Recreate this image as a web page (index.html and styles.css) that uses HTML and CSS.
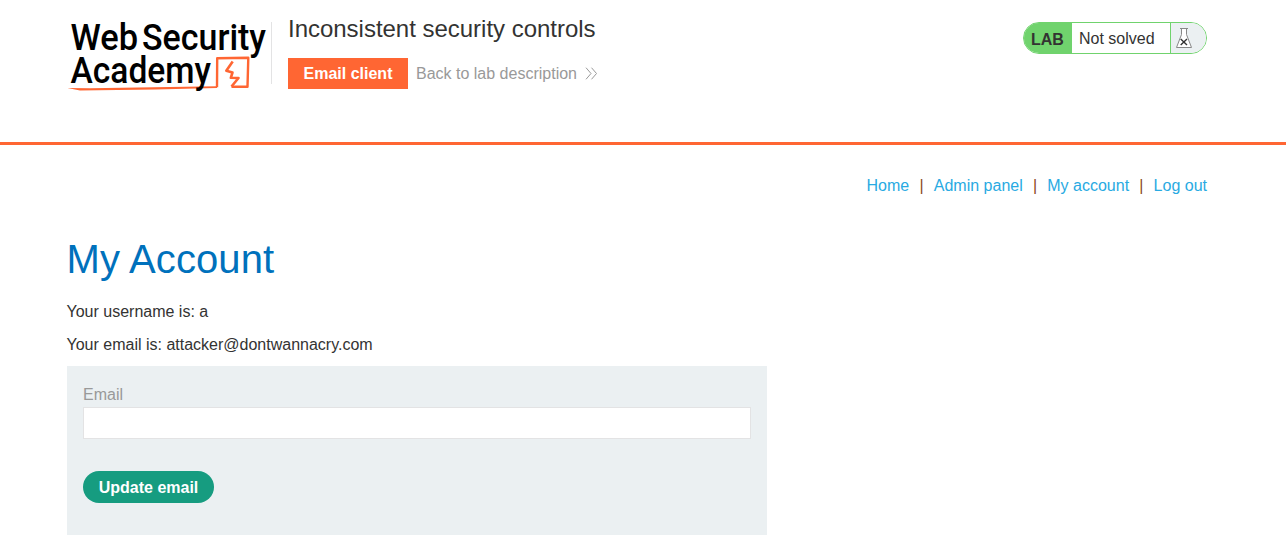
FILE: index.html
```html
<!DOCTYPE html>
<html lang="en">
<head>
<meta charset="utf-8">
<title>Inconsistent security controls</title>
<link rel="stylesheet" href="styles.css">
</head>
<body>
<header class="lab-header">
  <svg class="logo" width="204" height="84" viewBox="67 10 204 84" role="img" aria-label="Web Security Academy">
    <path class="logo-line" d="M67.5 88L90 88.2L217 86.2V88L155 89.4L80 90.4Z"/>
    <g class="logo-text">
      <text x="70.5" y="50" textLength="67.5" lengthAdjust="spacingAndGlyphs">Web</text>
      <text x="142" y="50" textLength="124" lengthAdjust="spacingAndGlyphs">Security</text>
      <text x="70.5" y="83" textLength="140.5" lengthAdjust="spacingAndGlyphs">Academy</text>
    </g>
    <path class="logo-box" d="M217 87.2L217.2 58.2L248.3 57.8L247.5 86.8L231.5 86.8"/>
    <path class="logo-bolt" d="M232.7 61.5L226.3 70.8L232.5 72.5L230.8 77.8L238.5 78L231.5 86.5"/>
  </svg>
  <div class="lab-title">
    <h2>Inconsistent security controls</h2>
    <div class="lab-links">
      <a class="client-button">Email client</a>
      <a class="back-link">Back to lab description
        <svg width="13" height="13" viewBox="0 0 13 13"><path d="M1 .7L6 6.5L1 12.3M6.5 .7L11.5 6.5L6.5 12.3"/></svg>
      </a>
    </div>
  </div>
  <div class="status">
    <span class="status-tag">LAB</span>
    <span class="status-text">Not solved</span>
    <span class="status-icon">
      <svg width="18" height="22" viewBox="0 0 18 22">
        <path class="flask" d="M5 1.5H13M6.5 1.5V7.5L1.5 20.5H16.5L11.5 7.5V1.5"/>
        <path class="cross" d="M5.7 12L12 18M12 12L5.7 18"/>
      </svg>
    </span>
  </div>
</header>
<main class="page">
  <nav class="top-nav">
    <a>Home</a><span>|</span><a>Admin panel</a><span>|</span><a>My account</a><span>|</span><a>Log out</a>
  </nav>
  <h1>My Account</h1>
  <p>Your username is: a</p>
  <p>Your email is: attacker@dontwannacry.com</p>
  <form class="email-form">
    <label for="email">Email</label>
    <input id="email" type="email">
    <button type="button">Update email</button>
  </form>
</main>
</body>
</html>
```

FILE: styles.css
```css
* { box-sizing: border-box; }
body {
  margin: 0;
  background: #fff;
  color: #333332;
  font: 16px/18px "Liberation Sans", Arial, sans-serif;
}
.lab-header {
  display: flex;
  align-items: flex-start;
  height: 145px;
  padding: 0 79px 0 67px;
  border-bottom: 3px solid #ff6633;
}
.logo { display: block; margin-top: 10px; overflow: visible; }
.logo-text { font: 500 37px Roboto, sans-serif; fill: #000; }
.logo-box, .logo-bolt { fill: none; stroke: #ff6633; stroke-width: 2.4; stroke-linejoin: round; }
.logo-bolt { stroke-width: 2.6; }
.logo-line { fill: #ff6633; }
.lab-title {
  margin-top: 22px;
  height: 62px;
  border-left: 1px solid #e3e3e4;
  padding-left: 16px;
}
.lab-title h2 {
  margin: -7px 0 0;
  font-size: 24px;
  line-height: 28px;
  font-weight: 400;
  letter-spacing: -0.02px;
}
.lab-links { display: flex; align-items: center; gap: 8px; margin-top: 15px; }
.client-button {
  width: 120px;
  height: 31px;
  background: #ff6633;
  color: #fff;
  font-weight: 700;
  line-height: 31px;
  text-align: center;
}
.back-link { display: flex; align-items: center; gap: 8px; color: #999; }
.back-link svg { fill: none; stroke: #999; stroke-width: 1; }
.status {
  display: flex;
  margin: 22px 0 0 auto;
  width: 184px;
  height: 32px;
  border: 1px solid #70d36d;
  border-radius: 16px;
  overflow: hidden;
  line-height: 31px;
}
.status-tag { width: 48px; padding-left: 7px; background: #70d36d; font-weight: 700; line-height: 33px; }
.status-text { width: 98px; padding-left: 7px; }
.status-icon { flex: 1; padding: 4px 0 0 4px; border-left: 1px solid #70d36d; background: #ebf0f2; }
.status-icon svg { display: block; }
.flask { fill: #fff; stroke: #888; stroke-width: 1; }
.cross { fill: none; stroke: #333; stroke-width: 1.4; }
.page { padding: 32px 79px 0 66.5px; }
.top-nav { display: flex; justify-content: flex-end; gap: 10.2px; color: #8b4a20; }
.top-nav a { color: #29aae2; }
h1 {
  margin: 41px 0 21px;
  color: #0071bc;
  font-size: 40px;
  line-height: 46px;
  font-weight: 400;
  letter-spacing: 0.1px;
}
.page p { margin: 0 0 15px; }
.email-form {
  display: flex;
  flex-direction: column;
  align-items: flex-start;
  width: 700px;
  height: 169px;
  margin: -3px 0 0 0.5px;
  padding: 20px 16px;
  background: #ebf0f2;
}
.email-form label { color: #999; }
.email-form input {
  width: 100%;
  height: 32px;
  margin: 3px 0 32px;
  border: 1px solid #e3e3e4;
  background: #fff;
}
.email-form button {
  width: 131px;
  height: 32px;
  padding: 1px 0 0;
  border: 0;
  border-radius: 16px;
  background: #169c80;
  color: #fff;
  font: 700 16px/31px "Liberation Sans", Arial, sans-serif;
}
```
